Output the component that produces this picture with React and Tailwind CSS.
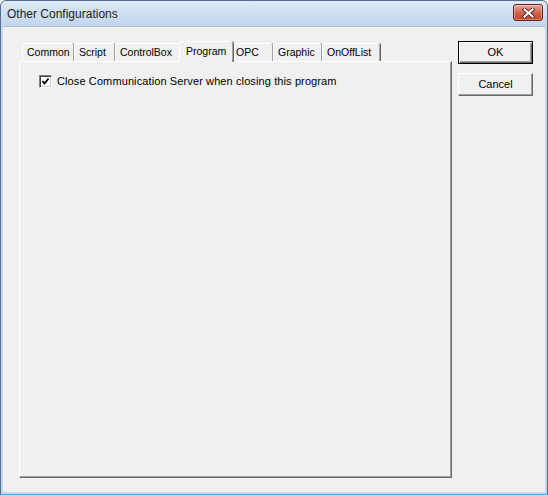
import React from "react";

const tabs = [
  { label: "Common", w: "w-[52px]" },
  { label: "Script", w: "w-[41px]" },
  { label: "ControlBox", w: "w-[66px]" },
  { label: "Program", w: "w-[54px]", active: true },
  { label: "OPC", w: "w-[42px]" },
  { label: "Graphic", w: "w-[49px]" },
  { label: "OnOffList", w: "w-[58px]" },
];

const CloseGlyph = () => (
  <svg width="13" height="10" viewBox="0 0 13 10">
    <path d="M2.5 1.5 L10.5 8.5 M10.5 1.5 L2.5 8.5" stroke="#4e2420" strokeWidth="3.8" strokeLinecap="square" />
    <path d="M2.5 1.5 L10.5 8.5 M10.5 1.5 L2.5 8.5" stroke="#ffffff" strokeWidth="2.1" strokeLinecap="square" />
  </svg>
);

const Tab = ({ label, w, active }) =>
  active ? (
    <div
      className={`${w} -mx-[2px] h-[21px] relative z-10 flex items-center pl-[6px] pb-[1px] bg-[#f0f0f0] border-t border-l border-white rounded-t-[2px] shadow-[inset_-1px_0_0_#a0a0a0,1px_0_0_#696969]`}
    >
      {label}
    </div>
  ) : (
    <div
      className={`${w} mt-[2px] h-[18px] flex items-center pl-[4px] pt-[1px] bg-[#f0f0f0] border-t border-l border-white rounded-t-[2px] shadow-[inset_-1px_0_0_#a0a0a0,1px_0_0_#696969]`}
    >
      {label}
    </div>
  );

export default function App() {
  return (
    <div
      className="w-[548px] h-[495px] flex flex-col bg-[#c3d7ed] border border-[#566f8c] border-b-[#3ab4ee] rounded-t-[6px] overflow-hidden text-[11px] text-black"
      style={{ fontFamily: '"Liberation Sans", Arial, sans-serif' }}
    >
      {/* title bar */}
      <div className="h-[25px] shrink-0 flex items-center pl-[6px] pr-[4px] bg-gradient-to-b from-[#dce8f5] to-[#c2d6ec]">
        <span className="text-[12px] text-[#1e1e1e]">Other Configurations</span>
        <div className="ml-auto -mt-[2px] w-[30px] h-[17px] rounded-[3px] border border-[#6b2019] bg-gradient-to-b from-[#e8a99c] via-[#d2674f] to-[#c24429] shadow-[inset_0_0_0_1px_rgba(255,255,255,0.35)] flex items-center justify-center">
          <CloseGlyph />
        </div>
      </div>

      {/* client area */}
      <div className="flex-1 mx-[2px] mb-[2px] bg-[#f0f0f0] border-t border-[#a9bfd8] flex">
        <div className="ml-[16px] mt-[14px] w-[433px] flex flex-col">
          <div className="h-[20px] flex items-start pl-[3px] text-[10.5px]">
            {tabs.map((t) => (
              <Tab key={t.label} {...t} />
            ))}
          </div>
          <div className="h-[417px] bg-[#f0f0f0] border-t border-l border-white border-r border-b border-r-[#696969] border-b-[#696969] shadow-[inset_-1px_-1px_0_#a0a0a0]">
            <div className="pl-[19px] pt-[13px] flex items-center gap-[5px]">
              <div className="w-[13px] h-[13px] bg-white border border-[#808080] border-r-white border-b-white shadow-[inset_1px_1px_0_#404040,inset_-1px_-1px_0_#d4d0c8] flex items-center justify-center">
                <svg width="9" height="9" viewBox="0 0 9 9">
                  <path d="M1.5 4 L3.5 6.5 L7.5 1.5" fill="none" stroke="#000" strokeWidth="1.8" />
                </svg>
              </div>
              <span className="leading-[13px] tracking-[0.11px]">
                Close Communication Server when closing this program
              </span>
            </div>
          </div>
        </div>

        <div className="ml-[6px] mt-[14px] w-[75px] flex flex-col gap-[9px]">
          <button className="h-[23px] bg-[#f0f0f0] border border-black shadow-[inset_1px_1px_0_#ffffff,inset_-1px_-1px_0_#696969,inset_-2px_-2px_0_#a0a0a0] flex items-center justify-center">
            OK
          </button>
          <button className="h-[23px] bg-[#f0f0f0] border border-white border-r-[#696969] border-b-[#696969] shadow-[inset_-1px_-1px_0_#a0a0a0] flex items-center justify-center">
            Cancel
          </button>
        </div>
      </div>
    </div>
  );
}
